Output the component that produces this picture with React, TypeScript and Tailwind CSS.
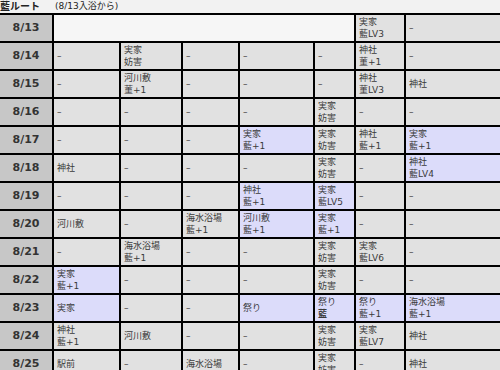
const FONT = { fontFamily: '"DejaVu Sans", "Noto Sans CJK JP", sans-serif' };

// "|" splits lines, leading "!" marks a 藍 event cell (lavender)
const ROWS: [string, string[]][] = [
  ["8/14", ["–", "実家|妨害", "–", "–", "–", "神社|菫+1", "–"]],
  ["8/15", ["–", "河川敷|菫+1", "–", "–", "–", "神社|菫LV3", "神社"]],
  ["8/16", ["–", "–", "–", "–", "実家|妨害", "–", "–"]],
  ["8/17", ["–", "–", "–", "!実家|藍+1", "実家|妨害", "神社|藍+1", "!実家|藍+1"]],
  ["8/18", ["神社", "–", "–", "–", "実家|妨害", "–", "!神社|藍LV4"]],
  ["8/19", ["–", "–", "–", "!神社|藍+1", "!実家|藍LV5", "–", "–"]],
  ["8/20", ["河川敷", "–", "海水浴場|藍+1", "!河川敷|藍+1", "!実家|藍+1", "–", "–"]],
  ["8/21", ["–", "海水浴場|藍+1", "–", "–", "実家|妨害", "実家|藍LV6", "–"]],
  ["8/22", ["!実家|藍+1", "–", "–", "–", "実家|妨害", "–", "–"]],
  ["8/23", ["!実家", "–", "–", "!祭り", "!祭り|藍", "!祭り|藍+1", "!海水浴場|藍+1"]],
  ["8/24", ["神社|藍+1", "河川敷", "–", "–", "実家|妨害", "実家|藍LV7", "神社"]],
  ["8/25", ["駅前", "–", "海水浴場", "–", "実家|妨害", "–", "神社"]],
];

function DateCell({ d }: { d: string }) {
  return (
    <div className="flex items-center justify-center bg-[#c7c7c7] text-[11px] font-bold text-[#333]">
      {d}
    </div>
  );
}

function Cell({ raw }: { raw: string }) {
  const hl = raw.startsWith("!");
  const lines = (hl ? raw.slice(1) : raw).split("|");
  return (
    <div
      className={`flex flex-col justify-center pl-[3px] text-[9px] leading-[12px] text-[#3a3a3a] ${
        hl ? "bg-[#dcdcfa]" : "bg-[#e1e1e1]"
      }`}
    >
      {lines.map((l, i) => (
        <span key={i} className={l === "藍" ? "font-bold" : ""}>
          {l}
        </span>
      ))}
    </div>
  );
}

export default function App() {
  return (
    <div className="h-[370px] w-[500px] overflow-hidden bg-[#f2f2f2]" style={FONT}>
      <div className="flex h-[13px] items-center text-[#222]">
        <span className="text-[10px] font-bold">藍ルート</span>
        <span className="ml-[15px] text-[9px]">(8/13入浴から)</span>
      </div>
      <div className="grid grid-cols-[52px_65px_60px_55px_73px_39px_48px_1fr] auto-rows-[26px] gap-[2px] border-y-2 border-black bg-black">
        <DateCell d="8/13" />
        <div className="col-span-5 bg-[#f6f6f6]" />
        <Cell raw="実家|藍LV3" />
        <Cell raw="–" />
        {ROWS.map(([d, cells]) => (
          <div key={d} className="contents">
            <DateCell d={d} />
            {cells.map((c, i) => (
              <Cell key={i} raw={c} />
            ))}
          </div>
        ))}
      </div>
    </div>
  );
}
